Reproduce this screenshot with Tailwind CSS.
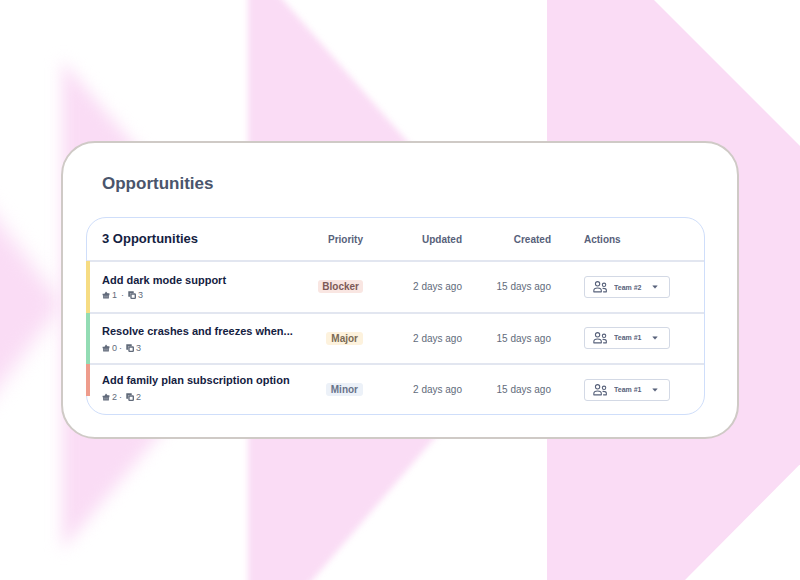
<!DOCTYPE html>
<html lang="en">

<head>
  <meta charset="UTF-8" />
  <meta name="viewport" content="width=device-width, initial-scale=1.0" />
  <title>Opportunities</title>
  <script src="https://cdn.jsdelivr.net/npm/@tailwindcss/browser@4"></script>
</head>

<body class="bg-white font-['Liberation_Sans',Arial,sans-serif]">
  <!-- Icons -->
  <svg class="hidden" xmlns="http://www.w3.org/2000/svg">
    <symbol id="icon-basket" viewBox="0 0 14 14">
      <path d="M7 1 L9.6 4 H13 V7.5 H12 V13 H2 V7.5 H1 V5 H4.4 Z" fill="currentColor" />
      <path d="M5.2 8 V11.5 M8.8 8 V11.5" stroke="#fff" stroke-width="0.8" />
    </symbol>
    <symbol id="icon-copy" viewBox="0 0 14 14">
      <path d="M1 1 H9.5 V3.4 H3.4 V9.5 H1 Z" fill="currentColor" stroke="currentColor" stroke-linejoin="round" />
      <rect x="5.2" y="5.2" width="7.6" height="7.6" rx="1" fill="none" stroke="currentColor" stroke-width="2.4" />
    </symbol>
    <symbol id="icon-team" viewBox="0 0 26 22">
      <g fill="none" stroke="currentColor" stroke-width="2" stroke-linejoin="round" stroke-linecap="round">
        <circle cx="8.5" cy="5" r="4" />
        <path d="M1.5 20 V18 C1.5 15 4.5 13 8.5 13 C12.5 13 15.5 15 15.5 18 V20 Z" />
        <circle cx="20.5" cy="7" r="3.2" />
        <path d="M18.5 13.5 C22.5 13.5 24.8 14.6 24.8 17 V20 H19.5" />
      </g>
    </symbol>
    <symbol id="icon-caret" viewBox="0 0 12 8">
      <path d="M1.5 1.5 H10.5 L6 6.5 Z" fill="currentColor" stroke="currentColor" stroke-linejoin="round" />
    </symbol>
  </svg>

  <main class="relative isolate flex min-h-screen items-center overflow-hidden px-[61px] py-8">
    <!-- Background arrows -->
    <svg class="absolute inset-0 -z-10 h-full w-full" viewBox="0 0 800 580" preserveAspectRatio="xMidYMid slice"
      fill="#fadcf5" aria-hidden="true">
      <polygon class="blur-[10px]" points="-60,144 62,304 -60,464" />
      <polygon class="blur-[8px]" points="62,60 270,304 62,550" />
      <polygon class="blur-[3px]" points="248,-40 550,304 248,655" />
      <polygon points="547,-20 634,-20 654,0 830,176 830,434 685,580 665,600 547,600" />
    </svg>

    <section class="w-full rounded-[34px] border-2 border-[#cfcac6] bg-white pt-[30px] pr-8 pb-[22px] pl-[23px]">
      <h1 class="px-4 text-[17px] leading-[22px] font-bold text-[#4a556c]">Opportunities</h1>

      <!-- Table -->
      <div class="mt-[22px] rounded-[20px] border border-[#cfdefa]">
        <table class="w-full table-fixed">
          <thead>
            <tr class="h-[43px] text-[10px] text-[#57617a]">
              <th class="pl-[15px] text-left text-[13px] font-bold text-[#14213f]">3 Opportunities</th>
              <th class="w-[60px] text-right font-bold">Priority</th>
              <th class="w-[99px] text-right font-bold">Updated</th>
              <th class="w-[89px] text-right font-bold">Created</th>
              <th class="w-[153px] pl-[33px] text-left font-bold">Actions</th>
            </tr>
          </thead>
          <tbody class="text-[10px] text-[#626b7b]">
            <tr class="h-[52px] border-t-2 border-[#e2e6f0]">
              <td class="relative pl-[15px]">
                <span class="absolute -top-px -left-px h-[52px] w-1 bg-[#f6dc83]"></span>
                <a href="#" class="block text-[11px] leading-4 font-bold whitespace-nowrap text-[#14213f]">Add dark mode support</a>
                <p class="flex items-center text-[9px] leading-[14px]">
                  <svg class="mr-0.5 size-2"><use href="#icon-basket" /></svg>1
                  <span class="px-1">·</span>
                  <svg class="mr-0.5 size-2"><use href="#icon-copy" /></svg>3
                </p>
              </td>
              <td class="pb-0.5 text-right">
                <span class="inline-block rounded-[3px] bg-[#f9e6e2] px-1 leading-[13px] font-bold text-[#7c5a57]">Blocker</span>
              </td>
              <td class="pb-0.5 text-right">2 days ago</td>
              <td class="pb-0.5 text-right">15 days ago</td>
              <td class="pl-[33px]">
                <div class="relative w-[86px] text-[#57617a]">
                  <svg class="pointer-events-none absolute top-[5px] left-[9px] h-3 w-3.5"><use href="#icon-team" /></svg>
                  <select aria-label="Team for Add dark mode support"
                    class="block h-[22px] w-full appearance-none rounded-[3px] border border-[#d3d9e5] bg-transparent pt-0.5 pl-[29px] text-[7px] font-bold">
                    <option>Team #1</option>
                    <option selected>Team #2</option>
                  </select>
                  <svg class="pointer-events-none absolute top-[9px] right-3 h-1 w-1.5"><use href="#icon-caret" /></svg>
                </div>
              </td>
            </tr>
            <tr class="h-[51px] border-t-2 border-[#e2e6f0]">
              <td class="relative pl-[15px]">
                <span class="absolute -top-px -left-px h-[51px] w-1 bg-[#93dcb4]"></span>
                <a href="#" class="block text-[11px] leading-4 font-bold whitespace-nowrap text-[#14213f]">Resolve crashes and freezes when...</a>
                <p class="mt-0.5 flex items-center text-[9px] leading-[14px]">
                  <svg class="mr-0.5 size-2"><use href="#icon-basket" /></svg>0
                  <span class="pr-1 pl-0.5">·</span>
                  <svg class="mr-0.5 size-2"><use href="#icon-copy" /></svg>3
                </p>
              </td>
              <td class="text-right">
                <span class="inline-block rounded-[3px] bg-[#fdf2dd] px-[5px] leading-[13px] font-bold text-[#7a6a55]">Major</span>
              </td>
              <td class="text-right">2 days ago</td>
              <td class="text-right">15 days ago</td>
              <td class="pb-0.5 pl-[33px]">
                <div class="relative w-[86px] text-[#57617a]">
                  <svg class="pointer-events-none absolute top-[5px] left-[9px] h-3 w-3.5"><use href="#icon-team" /></svg>
                  <select aria-label="Team for Resolve crashes and freezes"
                    class="block h-[22px] w-full appearance-none rounded-[3px] border border-[#d3d9e5] bg-transparent pt-0.5 pl-[29px] text-[7px] font-bold">
                    <option selected>Team #1</option>
                    <option>Team #2</option>
                  </select>
                  <svg class="pointer-events-none absolute top-[9px] right-3 h-1 w-1.5"><use href="#icon-caret" /></svg>
                </div>
              </td>
            </tr>
            <tr class="h-[50px] border-t-2 border-[#e2e6f0]">
              <td class="relative pb-1 pl-[15px]">
                <span class="absolute -top-px -left-px h-8 w-1 bg-[#ee9c8c]"></span>
                <a href="#" class="block text-[11px] leading-4 font-bold whitespace-nowrap text-[#14213f]">Add family plan subscription option</a>
                <p class="mt-0.5 flex items-center text-[9px] leading-[14px]">
                  <svg class="mr-0.5 size-2"><use href="#icon-basket" /></svg>2
                  <span class="pr-1 pl-0.5">·</span>
                  <svg class="mr-0.5 size-2"><use href="#icon-copy" /></svg>2
                </p>
              </td>
              <td class="text-right">
                <span class="inline-block rounded-[3px] bg-[#ecf1f8] px-[5px] leading-[13px] font-bold text-[#68738a]">Minor</span>
              </td>
              <td class="text-right">2 days ago</td>
              <td class="text-right">15 days ago</td>
              <td class="pl-[33px]">
                <div class="relative w-[86px] text-[#57617a]">
                  <svg class="pointer-events-none absolute top-[5px] left-[9px] h-3 w-3.5"><use href="#icon-team" /></svg>
                  <select aria-label="Team for Add family plan subscription option"
                    class="block h-[22px] w-full appearance-none rounded-[3px] border border-[#d3d9e5] bg-transparent pt-0.5 pl-[29px] text-[7px] font-bold">
                    <option selected>Team #1</option>
                    <option>Team #2</option>
                  </select>
                  <svg class="pointer-events-none absolute top-[9px] right-3 h-1 w-1.5"><use href="#icon-caret" /></svg>
                </div>
              </td>
            </tr>
          </tbody>
        </table>
      </div>
    </section>
  </main>
</body>

</html>
